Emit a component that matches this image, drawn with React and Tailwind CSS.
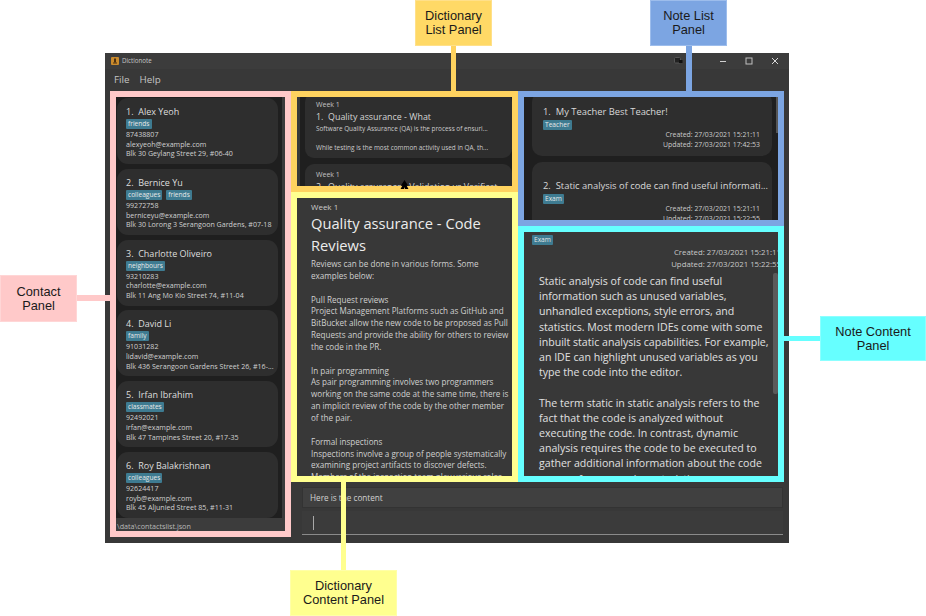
import React from "react";

const contacts = [
  { n: "1.  Alex Yeoh", t: ["friends"], p: "87438807", e: "alexyeoh@example.com", a: "Blk 30 Geylang Street 29, #06-40" },
  { n: "2.  Bernice Yu", t: ["colleagues", "friends"], p: "99272758", e: "berniceyu@example.com", a: "Blk 30 Lorong 3 Serangoon Gardens, #07-18" },
  { n: "3.  Charlotte Oliveiro", t: ["neighbours"], p: "93210283", e: "charlotte@example.com", a: "Blk 11 Ang Mo Kio Street 74, #11-04" },
  { n: "4.  David Li", t: ["family"], p: "91031282", e: "lidavid@example.com", a: "Blk 436 Serangoon Gardens Street 26, #16-..." },
  { n: "5.  Irfan Ibrahim", t: ["classmates"], p: "92492021", e: "irfan@example.com", a: "Blk 47 Tampines Street 20, #17-35" },
  { n: "6.  Roy Balakrishnan", t: ["colleagues"], p: "92624417", e: "royb@example.com", a: "Blk 45 Aljunied Street 85, #11-31" },
];

const dictLines = [
  "Reviews can be done in various forms. Some",
  "examples below:",
  "",
  "Pull Request reviews",
  "Project Management Platforms such as GitHub and",
  "BitBucket allow the new code to be proposed as Pull",
  "Requests and provide the ability for others to review",
  "the code in the PR.",
  "",
  "In pair programming",
  "As pair programming involves two programmers",
  "working on the same code at the same time, there is",
  "an implicit review of the code by the other member",
  "of the pair.",
  "",
  "Formal inspections",
  "Inspections involve a group of people systematically",
  "examining project artifacts to discover defects.",
  "Members of the inspection team play various roles",
];

const noteLines = [
  "Static analysis of code can find useful",
  "information such as unused variables,",
  "unhandled exceptions, style errors, and",
  "statistics. Most modern IDEs come with some",
  "inbuilt static analysis capabilities. For example,",
  "an IDE can highlight unused variables as you",
  "type the code into the editor.",
  "",
  "The term static in static analysis refers to the",
  "fact that the code is analyzed without",
  "executing the code. In contrast, dynamic",
  "analysis requires the code to be executed to",
  "gather additional information about the code",
  "e.g., performance characteristics.",
];

function Tag({ children }) {
  return (
    <span className="block h-[10px] px-[2px] bg-[#3e7b91] rounded-[1px] text-[6.6px] leading-[10px] text-[#e8e8e8]">
      {children}
    </span>
  );
}

function Lines({ lines }) {
  return lines.map((l, i) => <div key={i} className="whitespace-pre">{l || " "}</div>);
}

function ContactCard({ c }) {
  return (
    <div className="h-[66px] mb-[4.8px] rounded-[11px] bg-[#2e2e2e] pl-[9px] pt-[7px] overflow-hidden">
      <div className="text-[9px] leading-[13px] text-[#dedede] font-medium whitespace-pre">{c.n}</div>
      <div className="flex gap-[4px] h-[10px] mt-[1px]">
        {c.t.map((t) => <Tag key={t}>{t}</Tag>)}
      </div>
      <div className="text-[7.1px] leading-[9.7px] text-[#d0d0d0] mt-[1px] whitespace-nowrap">
        <div>{c.p}</div>
        <div>{c.e}</div>
        <div>{c.a}</div>
      </div>
    </div>
  );
}

function DictCard({ num, title, clip, top }) {
  return (
    <div className={`ml-[5px] rounded-[9px] bg-[#2e2e2e] pl-[11px] pr-[2px] overflow-hidden whitespace-nowrap ${top}`}>
      <div className="text-[7px] leading-[10px] text-[#c4c4c4]">Week 1</div>
      <div className="text-[8.9px] leading-[14px] text-[#d4d4d4] whitespace-pre font-medium">{num}  {title}</div>
      {!clip && (
        <div className="text-[6.4px] leading-[9.6px] text-[#cccccc]">
          <div>Software Quality Assurance (QA) is the process of ensuri...</div>
          <div className="mt-[9.6px]">While testing is the most common activity used in QA, th...</div>
        </div>
      )}
    </div>
  );
}

function NoteCard({ pad, name, tag, created, updated, h }) {
  return (
    <div className={`rounded-[10px] bg-[#2e2e2e] pl-[11px] pr-[12px] overflow-hidden mb-[6px] whitespace-nowrap ${h} ${pad}`}>
      <div className="text-[9.4px] leading-[14px] text-[#d8d8d8] whitespace-pre font-medium">{name}</div>
      <div className="flex mt-[1px]"><Tag>{tag}</Tag></div>
      <div className="text-[6.9px] leading-[9.5px] text-[#cccccc] text-right">
        <div>Created: {created}</div>
        <div>Updated: {updated}</div>
      </div>
    </div>
  );
}

function Label({ className, children }) {
  return (
    <div className={`absolute flex items-center justify-center text-center font-['Liberation_Sans',sans-serif] text-[12.8px] leading-[14px] text-[#1a1a1a] border ${className}`}>
      {children}
    </div>
  );
}

export default function App() {
  return (
    <div className="relative w-[926px] h-[616px] bg-white overflow-hidden pl-[105px] pt-[53px] font-['Open_Sans','Noto_Sans',sans-serif]">
      {/* application window */}
      <div className="w-[684px] h-[490px] bg-[#383838] flex flex-col">
        <div className="h-[16px] shrink-0 bg-[#3c3c3c] flex items-center pl-[6px] text-[6.2px] text-[#c8c8c8]">
          <svg width="8" height="8" viewBox="0 0 8 8" className="mr-[3px]">
            <rect width="8" height="8" rx="1" fill="#c98a2c" />
            <rect x="3" y="1.5" width="2" height="4" fill="#4a2f10" />
            <rect x="2" y="5.5" width="4" height="1" fill="#4a2f10" />
          </svg>
          <span className="font-medium">Dictionote</span>
          <div className="ml-auto flex items-center">
            <svg width="9" height="8" viewBox="0 0 9 8" className="mr-[36px]">
              <rect x="0.5" y="0.5" width="6" height="5.5" rx="1" fill="#222" stroke="#555" />
              <rect x="5" y="3" width="3.5" height="3" fill="#111" />
            </svg>
            <svg width="8" height="8" viewBox="0 0 8 8" className="mr-[18px]">
              <path d="M1 4.5H7" stroke="#d0d0d0" strokeWidth="1" />
            </svg>
            <svg width="8" height="8" viewBox="0 0 8 8" className="mr-[18px]">
              <rect x="1" y="1" width="6" height="6" fill="none" stroke="#c0c0c0" strokeWidth="1" />
            </svg>
            <svg width="8" height="8" viewBox="0 0 8 8" className="mr-[10px]">
              <path d="M1 1L7 7M7 1L1 7" stroke="#d8d8d8" strokeWidth="1" />
            </svg>
          </div>
        </div>
        <div className="h-[22px] shrink-0 bg-[#383838] flex items-center pl-[9px] gap-[10px] text-[9.8px] text-[#c4c4c4]">
          <span>File</span>
          <span>Help</span>
        </div>

        <div className="flex flex-1 min-h-0">
          {/* Contact panel */}
          <div className="ml-[5px] w-[181px] h-[446px] shrink-0 border-[6px] border-[#ffc9c9] flex flex-col">
            <div className="h-[421px] flex bg-[#1f1f1f] overflow-hidden">
              <div className="flex-1 pt-[1px] pl-[1px] pr-[4px] min-w-0">
                {contacts.map((c) => <ContactCard key={c.n} c={c} />)}
              </div>
              <div className="w-[3px] bg-[#3a3a3a]" />
            </div>
            <div className="flex-1 bg-[#3c3c3c] text-[7.2px] leading-[17px] text-[#b8b8b8] pl-[1px] whitespace-nowrap overflow-hidden">
              \data\contactslist.json
            </div>
          </div>

          <div className="flex-1 flex flex-col min-w-0">
            <div className="flex h-[391px] shrink-0">
              {/* Dictionary column */}
              <div className="w-[227px] shrink-0 flex flex-col">
                <div className="h-[101px] shrink-0 border-[6px] border-[#ffd35f] bg-[#1f1f1f] overflow-hidden">
                  <div className="h-full border-l-[3px] border-[#3a3a3a] overflow-hidden">
                    <DictCard num="1." title="Quality assurance - What" top="-mt-[4px] h-[65px] mb-[6px] pt-[7px]" />
                    <DictCard num="2." title="Quality assurance - Validation vs Verificat..." clip top="h-[40px] pt-[6px]" />
                  </div>
                </div>
                <div className="h-[290px] shrink-0 border-[6px] border-[#ffff8f] bg-[#383838] pl-[14px] pt-[3px] overflow-hidden whitespace-nowrap">
                  <div className="text-[8px] leading-[11px] text-[#cccccc]">Week 1</div>
                  <div className="text-[14.7px] leading-[22px] text-[#ececec]">
                    Quality assurance - Code<br />Reviews
                  </div>
                  <div className="text-[8.1px] leading-[11.85px] text-[#d0d0d0] mt-[2px]">
                    <Lines lines={dictLines} />
                  </div>
                </div>
              </div>

              {/* Note column */}
              <div className="w-[266px] shrink-0 flex flex-col">
                <div className="h-[135px] shrink-0 border-[6px] border-[#7ca5e2] bg-[#1f1f1f] overflow-hidden relative">
                  <div className="pl-[8px] pr-[6px] -mt-[5px]">
                    <NoteCard h="h-[64px]" pad="pt-[13px]" name="1.  My Teacher Best Teacher!" tag="Teacher" created="27/03/2021 15:21:11" updated="27/03/2021 17:42:53" />
                    <NoteCard h="h-[70px]" pad="pt-[17px]" name="2.  Static analysis of code can find useful informati..." tag="Exam" created="27/03/2021 15:21:11" updated="27/03/2021 15:22:55" />
                  </div>
                  <div className="absolute top-0 right-0 w-[2px] h-[36px] bg-[#555555]" />
                </div>
                <div className="h-[256px] shrink-0 border-[6px] border-[#66ffff] bg-[#383838] overflow-hidden relative">
                  <div className="pl-[8px] pt-[3px] h-[13px] flex"><Tag>Exam</Tag></div>
                  <div className="text-[7.8px] leading-[12px] text-[#c8c8c8] text-right mt-[1px] -mr-[3px] whitespace-nowrap">
                    <div>Created: 27/03/2021 15:21:11</div>
                    <div>Updated: 27/03/2021 15:22:55</div>
                  </div>
                  <div className="pl-[15px] mt-[4px] text-[10.6px] leading-[15.2px] font-medium text-[#e0e0e0] whitespace-nowrap">
                    <Lines lines={noteLines} />
                  </div>
                  <div className="absolute top-[41px] right-0 w-[5px] h-[121px] rounded-[2px] bg-[#5a5a5a]" />
                </div>
              </div>
            </div>

            {/* Command area */}
            <div className="ml-[11px] mr-[6px] mt-[5px] h-[21px] shrink-0 bg-[#404040] border border-[#333333] pl-[7px] text-[8.2px] leading-[19px] text-[#d0d0d0]">
              Here is the content
            </div>
            <div className="ml-[11px] mr-[6px] mt-[3px] h-[24px] shrink-0 bg-[#3b3b3b] border-b border-[#8a8a8a] pt-[5px] pl-[11px]">
              <div className="w-px h-[14px] bg-[#a8a8a8]" />
            </div>
          </div>
        </div>
      </div>

      {/* annotations */}
      <div className="absolute left-[77px] top-[295px] w-[33px] h-[6px] bg-[#ffc9c9]" />
      <Label className="left-0 top-[275px] w-[77px] h-[47px] bg-[#ffc9c9] border-[#ffd6d6]">Contact<br />Panel</Label>

      <div className="absolute left-[451px] top-[46px] w-[5px] h-[45px] bg-[#ffd35f]" />
      <Label className="left-[415px] top-0 w-[77px] h-[46px] bg-[#ffd966] border-[#ffe08a]">Dictionary<br />List Panel</Label>

      <div className="absolute left-[686px] top-[46px] w-[6px] h-[45px] bg-[#7ca5e2]" />
      <Label className="left-[650px] top-0 w-[77px] h-[46px] bg-[#7ca5e2] border-[#9dbdec]">Note List<br />Panel</Label>

      <div className="absolute left-[784px] top-[336px] w-[36px] h-[5px] bg-[#66ffff]" />
      <Label className="left-[820px] top-[316px] w-[106px] h-[45px] bg-[#66ffff] border-[#8cffff]">Note Content<br />Panel</Label>

      <div className="absolute left-[341px] top-[482px] w-[5px] h-[88px] bg-[#ffff8f]" />
      <Label className="left-[290px] top-[570px] w-[107px] h-[46px] bg-[#ffff8f] border-[#ffffa8]">Dictionary<br />Content Panel</Label>

      {/* mouse pointer */}
      <svg width="9" height="9" viewBox="0 0 9 9" className="absolute left-[400px] top-[180px]">
        <path d="M4.5 0L8 5.5H6.5L8.5 9H5L4.5 7L4 9H0.5L2.5 5.5H1Z" fill="#000" />
      </svg>
    </div>
  );
}
